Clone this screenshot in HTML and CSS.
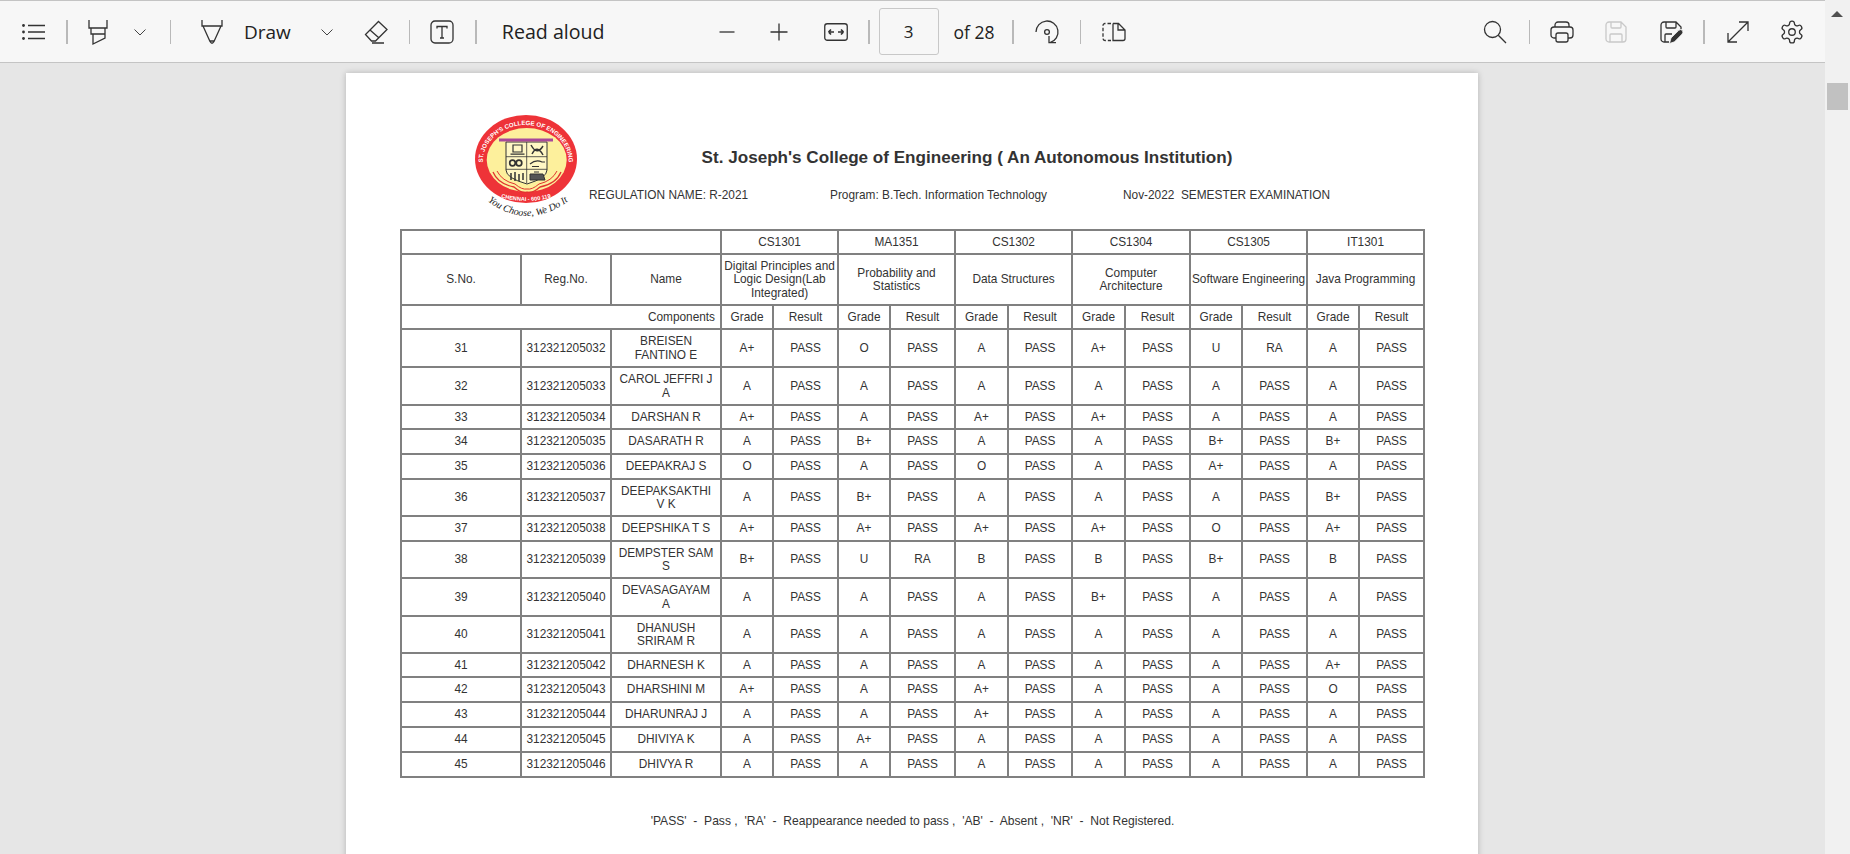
FILE: index.html
```html
<!DOCTYPE html>
<html lang="en">
<head>
<meta charset="utf-8">
<title>PDF viewer</title>
<link rel="stylesheet" href="styles.css">
</head>
<body>
<div class="app">
  <div class="main">
    <header class="toolbar">
      <svg class="ico g21" viewBox="0 0 24 24"><path d="M7 5.500H24M7 12H24M7 18.500H24"/><circle class="dot" cx="2.500" cy="5.500" r="1.400"/><circle class="dot" cx="2.500" cy="12" r="1.400"/><circle class="dot" cx="2.500" cy="18.500" r="1.400"/></svg>
      <span class="sep g21"></span>
      <svg class="ico g18" viewBox="0 0 24 24"><path d="M3 0V8H21V0M5 8V14H19V8M7 14V24L19 18V14"/></svg>
      <svg class="chev g22" viewBox="0 0 16 24"><path d="M2.500 9.500L8 15L13.500 9.500"/></svg>
      <span class="sep thin g22"></span>
      <svg class="ico g29" viewBox="0 0 24 24"><path d="M2 0V6H22V0M3 6L10 21.500Q12 25 14 21.500L21 6M10 21H14"/></svg>
      <span class="label g20">Draw</span>
      <svg class="chev g28" viewBox="0 0 16 24"><path d="M2.500 9.500L8 15L13.500 9.500"/></svg>
      <svg class="ico g29" viewBox="0 0 24 24"><path d="M14.500 1.500L23 9.500L11.500 21H7.500L1.500 14.500ZM6 10L14.500 17.500M8 23H20"/></svg>
      <span class="sep thin g21"></span>
      <svg class="ico g20" viewBox="0 0 24 24"><rect x="1" y="1" width="22" height="22" rx="4"/><path d="M7 8.500V6.500H17V8.500M12 6.500V18M10 18H14"/></svg>
      <span class="sep g21"></span>
      <span class="label wide g25">Read aloud</span>
      <svg class="ico g110" viewBox="0 0 24 24"><path d="M4.500 12H19.500"/></svg>
      <svg class="ico g28" viewBox="0 0 24 24"><path d="M12 3.500V20.500M3.500 12H20.500"/></svg>
      <svg class="ico g33" viewBox="0 0 24 24"><rect x="0.750" y="3.750" width="22.500" height="16.500" rx="2.500"/><path class="bold" d="M4.500 12H10M4.500 12L7 9.500M4.500 12L7 14.500M19.500 12H14M19.500 12L17 9.500M19.500 12L17 14.500"/></svg>
      <span class="sep g20"></span>
      <span class="pagebox g9">3</span>
      <span class="count g15">of 28</span>
      <span class="sep g18"></span>
      <svg class="ico g21" viewBox="0 0 24 24"><path d="M1 12A11 11 0 1 1 15 22.600M14 16V22.700H21"/><circle cx="12" cy="12" r="2.400"/></svg>
      <span class="sep thin g21"></span>
      <svg class="ico g21" viewBox="0 0 24 24"><path class="dash" d="M9 3.500H3A2 2 0 0 0 1 5.500V18.500A2 2 0 0 0 3 20.500H9"/><path d="M11 3.500V20.500H21A2 2 0 0 0 23 18.500V10L16.500 3.500H11M16 3.500V10H23"/></svg>
      <div class="right">
        <svg class="ico" viewBox="0 0 24 24"><circle cx="9.500" cy="9.500" r="8"/><path d="M15.300 15.300L23 23"/></svg>
        <span class="sep thin g22"></span>
        <svg class="ico g20" viewBox="0 0 24 24"><path d="M5 7V5A3 3 0 0 1 8 2H16A3 3 0 0 1 19 5V7M6 18H4A3 3 0 0 1 1 15V10A3 3 0 0 1 4 7H20A3 3 0 0 1 23 10V15A3 3 0 0 1 20 18H18"/><rect x="6" y="13" width="12" height="9" rx="2"/></svg>
        <svg class="ico off g30" viewBox="0 0 24 24"><path d="M5 2H17L22 7V19A3 3 0 0 1 19 22H5A3 3 0 0 1 2 19V5A3 3 0 0 1 5 2ZM7 2V7A1 1 0 0 0 8 8H16A1 1 0 0 0 17 7V2.500M6 22V15A1 1 0 0 1 7 14H17A1 1 0 0 1 18 15V22"/></svg>
        <svg class="ico g31" viewBox="0 0 24 24"><path d="M10 22H5A3 3 0 0 1 2 19V5A3 3 0 0 1 5 2H17L22 7V9M7 2V7A1 1 0 0 0 8 8H16A1 1 0 0 0 17 7V2.500M6 22V15A1 1 0 0 1 7 14H13"/><path class="fill" d="M10.500 23.500L12 18L19.800 10.300Q21.800 8.800 23.400 10.500Q24.600 12.300 23.200 14L15.500 21.800Z"/></svg>
        <span class="sep g20"></span>
        <svg class="ico g21" viewBox="0 0 24 24"><path d="M2 22L22 2M13 2H22V11M2 13V22H11"/></svg>
        <svg class="ico g30" viewBox="1 1 22 22"><path class="cog" d="M12.220 2h-.44a2 2 0 0 0-2 2v.18a2 2 0 0 1-1 1.730l-.43.25a2 2 0 0 1-2 0l-.15-.08a2 2 0 0 0-2.730.73l-.22.38a2 2 0 0 0 .73 2.730l.15.1a2 2 0 0 1 1 1.720v.51a2 2 0 0 1-1 1.740l-.15.09a2 2 0 0 0-.73 2.730l.22.38a2 2 0 0 0 2.730.73l.15-.08a2 2 0 0 1 2 0l.43.25a2 2 0 0 1 1 1.730V20a2 2 0 0 0 2 2h.44a2 2 0 0 0 2-2v-.18a2 2 0 0 1 1-1.730l.43-.25a2 2 0 0 1 2 0l.15.08a2 2 0 0 0 2.730-.73l.22-.39a2 2 0 0 0-.73-2.730l-.15-.08a2 2 0 0 1-1-1.740v-.5a2 2 0 0 1 1-1.740l.15-.09a2 2 0 0 0 .73-2.730l-.22-.38a2 2 0 0 0-2.730-.73l-.15.08a2 2 0 0 1-2 0l-.43-.25a2 2 0 0 1-1-1.730V4a2 2 0 0 0-2-2z"/><circle class="cog" cx="12" cy="12" r="3"/></svg>
      </div>
    </header>
    <main class="viewer">
      <article class="page">
        <div class="head">
          <svg class="logo" viewBox="0 0 110 105">
            <defs>
              <path id="arcTop" d="M10.700 48A43 37 0 1 1 96.700 48"/>
              <path id="arcBot" d="M24 82Q54 92 84 82"/>
              <path id="arcTag" d="M14 86Q55 118 98 86"/>
            </defs>
            <ellipse cx="54" cy="45" rx="51" ry="44" fill="#ee3338"/>
            <ellipse cx="54.700" cy="46" rx="40" ry="32" fill="#fdf09c"/>
            <text class="logo-arc"><textPath href="#arcTop" startOffset="50%" text-anchor="middle">ST. JOSEPH'S COLLEGE OF ENGINEERING</textPath></text>
            <text class="logo-arc small"><textPath href="#arcBot" startOffset="50%" text-anchor="middle">CHENNAI - 600 119</textPath></text>
            <path d="M34 28H75V56Q75 64 55 70Q34 64 34 56Z" fill="#fff7c4" stroke="#333" stroke-width="1"/>
            <path d="M27 26H81" stroke="#a8489a" stroke-width="3"/>
            <path d="M54.700 28V69M34 42.700H75M34 55.300H75" stroke="#333" stroke-width=".8"/>
            <path d="M41 31H50V38H41ZM38.500 40.200H52.500" stroke="#333" stroke-width="1.200" fill="none"/>
            <path d="M59 31Q65 42 71 32M60 40Q65 30 71 41" stroke="#333" stroke-width="1.500" fill="none"/>
            <circle cx="40.500" cy="49" r="2.800" fill="none" stroke="#333" stroke-width="1.700"/>
            <circle cx="47" cy="49" r="2.800" fill="none" stroke="#333" stroke-width="1.700"/>
            <path d="M58 50Q64 45 70 48H73M60 52.500H67" stroke="#333" stroke-width="1.200" fill="none"/>
            <path d="M39 59V66M43 58V67M47 60V67M51 59V66" stroke="#333" stroke-width="1.500"/>
            <path d="M58 66V60H71L73 66ZM62 58H67" fill="#555" stroke="#333" stroke-width="1"/>
            <path d="M21 58Q26 70 42 73Q50 80 55 78Q60 80 68 73Q84 70 89 58" fill="none" stroke="#e0342f" stroke-width="1.300"/>
            <path d="M25 57Q30 67 43 70Q50 76 55 75Q60 76 67 70Q80 67 85 57" fill="none" stroke="#e0342f" stroke-width="1"/>
            <text class="logo-tag"><textPath href="#arcTag" startOffset="50%" text-anchor="middle">You Choose, We Do It</textPath></text>
          </svg>
          <div class="head-text">
            <h1 class="title">St. Joseph's College of Engineering ( An Autonomous Institution)</h1>
            <div class="meta">
              <span>REGULATION NAME: R-2021</span>
              <span>Program: B.Tech. Information Technology</span>
              <span class="pre">Nov-2022  SEMESTER EXAMINATION</span>
            </div>
          </div>
        </div>
        <table class="marks">
          <colgroup>
            <col class="c120"><col class="c90"><col class="c110">
            <col class="c52"><col class="c65"><col class="c52"><col class="c65"><col class="c53"><col class="c64">
            <col class="c53"><col class="c65"><col class="c52"><col class="c65"><col class="c52"><col class="c65">
          </colgroup>
          <tr class="r24"><td colspan="3"></td><td colspan="2">CS1301</td><td colspan="2">MA1351</td><td colspan="2">CS1302</td><td colspan="2">CS1304</td><td colspan="2">CS1305</td><td colspan="2">IT1301</td></tr>
          <tr class="r51"><td>S.No.</td><td>Reg.No.</td><td>Name</td><td colspan="2">Digital Principles and Logic Design(Lab Integrated)</td><td colspan="2">Probability and Statistics</td><td colspan="2">Data Structures</td><td colspan="2">Computer Architecture</td><td colspan="2">Software Engineering</td><td colspan="2">Java Programming</td></tr>
          <tr class="r24"><td colspan="3" class="comp">Components</td><td>Grade</td><td>Result</td><td>Grade</td><td>Result</td><td>Grade</td><td>Result</td><td>Grade</td><td>Result</td><td>Grade</td><td>Result</td><td>Grade</td><td>Result</td></tr>
          <tr class="r38"><td>31</td><td>312321205032</td><td class="name">BREISEN FANTINO E</td><td>A+</td><td>PASS</td><td>O</td><td>PASS</td><td>A</td><td>PASS</td><td>A+</td><td>PASS</td><td>U</td><td>RA</td><td>A</td><td>PASS</td></tr>
          <tr class="r38"><td>32</td><td>312321205033</td><td class="name">CAROL JEFFRI J A</td><td>A</td><td>PASS</td><td>A</td><td>PASS</td><td>A</td><td>PASS</td><td>A</td><td>PASS</td><td>A</td><td>PASS</td><td>A</td><td>PASS</td></tr>
          <tr class="r24"><td>33</td><td>312321205034</td><td class="name">DARSHAN R</td><td>A+</td><td>PASS</td><td>A</td><td>PASS</td><td>A+</td><td>PASS</td><td>A+</td><td>PASS</td><td>A</td><td>PASS</td><td>A</td><td>PASS</td></tr>
          <tr class="r25"><td>34</td><td>312321205035</td><td class="name">DASARATH R</td><td>A</td><td>PASS</td><td>B+</td><td>PASS</td><td>A</td><td>PASS</td><td>A</td><td>PASS</td><td>B+</td><td>PASS</td><td>B+</td><td>PASS</td></tr>
          <tr class="r25"><td>35</td><td>312321205036</td><td class="name">DEEPAKRAJ S</td><td>O</td><td>PASS</td><td>A</td><td>PASS</td><td>O</td><td>PASS</td><td>A</td><td>PASS</td><td>A+</td><td>PASS</td><td>A</td><td>PASS</td></tr>
          <tr class="r37"><td>36</td><td>312321205037</td><td class="name">DEEPAKSAKTHI V K</td><td>A</td><td>PASS</td><td>B+</td><td>PASS</td><td>A</td><td>PASS</td><td>A</td><td>PASS</td><td>A</td><td>PASS</td><td>B+</td><td>PASS</td></tr>
          <tr class="r25"><td>37</td><td>312321205038</td><td class="name">DEEPSHIKA T S</td><td>A+</td><td>PASS</td><td>A+</td><td>PASS</td><td>A+</td><td>PASS</td><td>A+</td><td>PASS</td><td>O</td><td>PASS</td><td>A+</td><td>PASS</td></tr>
          <tr class="r37"><td>38</td><td>312321205039</td><td class="name">DEMPSTER SAM S</td><td>B+</td><td>PASS</td><td>U</td><td>RA</td><td>B</td><td>PASS</td><td>B</td><td>PASS</td><td>B+</td><td>PASS</td><td>B</td><td>PASS</td></tr>
          <tr class="r38"><td>39</td><td>312321205040</td><td class="name">DEVASAGAYAM A</td><td>A</td><td>PASS</td><td>A</td><td>PASS</td><td>A</td><td>PASS</td><td>B+</td><td>PASS</td><td>A</td><td>PASS</td><td>A</td><td>PASS</td></tr>
          <tr class="r37"><td>40</td><td>312321205041</td><td class="name">DHANUSH SRIRAM R</td><td>A</td><td>PASS</td><td>A</td><td>PASS</td><td>A</td><td>PASS</td><td>A</td><td>PASS</td><td>A</td><td>PASS</td><td>A</td><td>PASS</td></tr>
          <tr class="r24"><td>41</td><td>312321205042</td><td class="name">DHARNESH K</td><td>A</td><td>PASS</td><td>A</td><td>PASS</td><td>A</td><td>PASS</td><td>A</td><td>PASS</td><td>A</td><td>PASS</td><td>A+</td><td>PASS</td></tr>
          <tr class="r25"><td>42</td><td>312321205043</td><td class="name">DHARSHINI M</td><td>A+</td><td>PASS</td><td>A</td><td>PASS</td><td>A+</td><td>PASS</td><td>A</td><td>PASS</td><td>A</td><td>PASS</td><td>O</td><td>PASS</td></tr>
          <tr class="r25"><td>43</td><td>312321205044</td><td class="name">DHARUNRAJ J</td><td>A</td><td>PASS</td><td>A</td><td>PASS</td><td>A+</td><td>PASS</td><td>A</td><td>PASS</td><td>A</td><td>PASS</td><td>A</td><td>PASS</td></tr>
          <tr class="r25"><td>44</td><td>312321205045</td><td class="name">DHIVIYA K</td><td>A</td><td>PASS</td><td>A+</td><td>PASS</td><td>A</td><td>PASS</td><td>A</td><td>PASS</td><td>A</td><td>PASS</td><td>A</td><td>PASS</td></tr>
          <tr class="r25"><td>45</td><td>312321205046</td><td class="name">DHIVYA R</td><td>A</td><td>PASS</td><td>A</td><td>PASS</td><td>A</td><td>PASS</td><td>A</td><td>PASS</td><td>A</td><td>PASS</td><td>A</td><td>PASS</td></tr>
        </table>
        <p class="legend">'PASS'  -  Pass ,  'RA'  -  Reappearance needed to pass ,  'AB'  -  Absent ,  'NR'  -  Not Registered.</p>
      </article>
    </main>
  </div>
  <aside class="scrollbar">
    <span class="arrow"></span>
    <span class="thumb"></span>
  </aside>
</div>
</body>
</html>
```
FILE: styles.css
```css
* { box-sizing: border-box; }
html, body { margin: 0; height: 100%; overflow: hidden; }
body { font-family: "Liberation Sans", Arial, sans-serif; color: #333; background: #e6e6e6; }
.app { display: flex; height: 854px; }
.main { flex: 1; min-width: 0; display: flex; flex-direction: column; }

/* toolbar */
.toolbar { display: flex; align-items: center; height: 63px; flex: none; background: #f7f7f7; border-top: 1px solid #c4c4c4; border-bottom: 1px solid #c4c4c4; padding-right: 21px; font-family: "Open Sans", "Noto Sans", sans-serif; }
.ico { width: 24px; height: 24px; flex: none; fill: none; stroke: #333; stroke-width: 1.300; overflow: visible; }
.ico .dot { fill: #333; stroke: none; }
.ico .bold { stroke-width: 1.700; }
.ico .dash { stroke-dasharray: 3.500 2; }
.ico .fill { fill: #333; stroke: #f7f7f7; stroke-width: .8; }
.ico .cog { stroke-width: 1.200; }
.ico.off { stroke: #c9c9c9; }
.chev { width: 16px; height: 24px; flex: none; fill: none; stroke: #444; stroke-width: 1; }
.sep { width: 2px; height: 24px; flex: none; background: #b9b9b9; }
.sep.thin { width: 1px; }
.label { font-size: 19px; line-height: 24px; color: #222; white-space: nowrap; flex: none; }
.label.wide { font-size: 19.600px; }
.pagebox { width: 60px; height: 47px; flex: none; display: flex; align-items: center; justify-content: center; border: 1px solid #c8c8c8; border-radius: 3px; font-size: 17px; color: #222; }
.count { font-size: 17.500px; color: #222; width: 40px; flex: none; white-space: nowrap; }
.right { margin-left: auto; display: flex; align-items: center; }
.g9 { margin-left: 9px; }
.g15 { margin-left: 15px; }
.g18 { margin-left: 18px; }
.g20 { margin-left: 20px; }
.g21 { margin-left: 21px; }
.g22 { margin-left: 22px; }
.g25 { margin-left: 25px; }
.g28 { margin-left: 28px; }
.g29 { margin-left: 29px; }
.g30 { margin-left: 30px; }
.g31 { margin-left: 31px; }
.g33 { margin-left: 33px; }
.g110 { margin-left: 110px; }

/* page */
.viewer { flex: 1; min-height: 0; overflow: hidden; }
.page { width: 1132px; height: 900px; margin: 10px 0 0 346px; padding: 41px 54px 0; background: #fff; box-shadow: 0 0 6px rgba(0, 0, 0, .22); }
.head { display: flex; align-items: flex-start; height: 115px; }
.logo { width: 110px; height: 105px; flex: none; margin-left: 72px; overflow: visible; }
.logo-arc { font-size: 6.100px; font-weight: 700; fill: #fff; }
.logo-arc.small { font-size: 5.600px; }
.logo-tag { font-family: "Liberation Serif", serif; font-style: italic; font-size: 10px; fill: #222; }
.head-text { margin-left: 7px; flex: 1; }
.title { width: 756px; margin: 34px 0 20px; font-size: 17.100px; line-height: 20px; font-weight: 700; text-align: center; white-space: nowrap; }
.meta { display: grid; grid-template-columns: 241px 293px auto; font-size: 11.850px; line-height: 14px; white-space: nowrap; }
.pre { white-space: pre; }

/* table */
.marks { width: 1025px; table-layout: fixed; border-collapse: collapse; border: 2px solid #808080; font-size: 11.850px; line-height: 13.300px; }
.marks td { border: 2px solid #808080; padding: 1px 0 0; text-align: center; vertical-align: middle; }
.marks td.comp { text-align: right; padding-right: 5px; }
.marks td.name { padding: 1px 6px 0; }
.c120 { width: 120px; }
.c90 { width: 90px; }
.c110 { width: 110px; }
.c52 { width: 52px; }
.c53 { width: 53px; }
.c64 { width: 64px; }
.c65 { width: 65px; }
.r24 { height: 24px; }
.r25 { height: 25px; }
.r37 { height: 37px; }
.r38 { height: 38px; }
.r51 { height: 51px; }
.legend { margin: 36px 0 0; font-size: 12.100px; line-height: 14px; text-align: center; white-space: pre; width: 1025px; }

/* scrollbar */
.scrollbar { width: 25px; flex: none; background: #f1f1f1; position: relative; }
.arrow { position: absolute; top: 11px; left: 6px; width: 0; height: 0; border-left: 6px solid transparent; border-right: 6px solid transparent; border-bottom: 6px solid #505050; }
.thumb { position: absolute; top: 83px; left: 2px; width: 21px; height: 27px; background: #c1c1c1; }
```
